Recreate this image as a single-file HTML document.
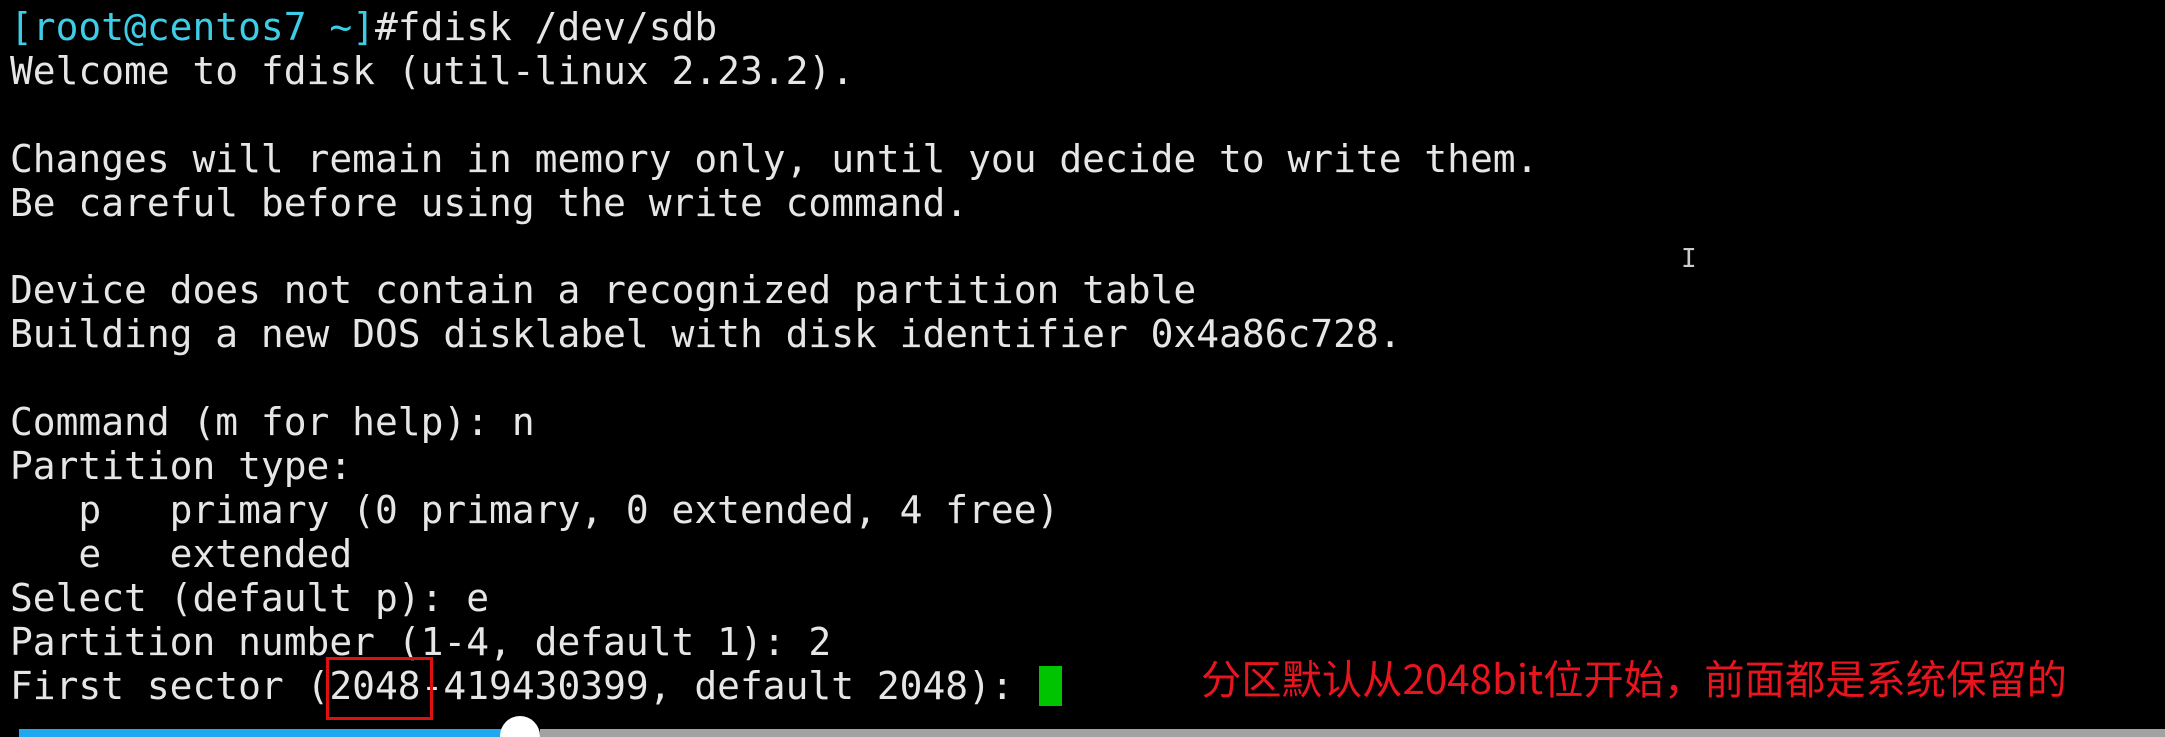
<!DOCTYPE html>
<html><head><meta charset="utf-8"><style>
html,body{margin:0;padding:0;background:#000;width:2165px;height:737px;overflow:hidden;position:relative}
pre{position:absolute;left:10px;top:6px;margin:0;font-family:"DejaVu Sans Mono","Liberation Mono",monospace;font-size:37.9px;line-height:43.9px;color:#e6e6e6;letter-spacing:0}
.c{color:#3ecde6}
.box{position:absolute;left:326px;top:657px;width:101px;height:57px;border:3px solid #e01010}
.cur{position:absolute;left:1039px;top:666px;width:23px;height:40px;background:#00c400}
.note{position:absolute;left:1201px;top:651px;font-family:"Noto Sans CJK SC","Liberation Sans",sans-serif;font-size:40.3px;color:#e8141e;white-space:nowrap;line-height:52px}
.blue{position:absolute;left:19px;top:729px;width:490px;height:8px;background:#1ea8f0}
.grey{position:absolute;left:540px;top:729px;width:1625px;height:8px;background:#a2a2a2}
.thumb{position:absolute;left:500px;top:716px;width:40px;height:40px;border-radius:50%;background:#fff}
.ib{position:absolute;left:1681px;top:244px;font-family:"DejaVu Sans Mono",monospace;font-size:26px;color:#ccc}
</style></head><body>
<pre><span class="c">[root@centos7 ~]</span>#fdisk /dev/sdb
Welcome to fdisk (util-linux 2.23.2).

Changes will remain in memory only, until you decide to write them.
Be careful before using the write command.

Device does not contain a recognized partition table
Building a new DOS disklabel with disk identifier 0x4a86c728.

Command (m for help): n
Partition type:
   p   primary (0 primary, 0 extended, 4 free)
   e   extended
Select (default p): e
Partition number (1-4, default 1): 2
First sector (2048-419430399, default 2048): </pre>
<div class="box"></div>
<div class="cur"></div>
<div class="ib">I</div>
<div class="note">分区默认从2048bit位开始，前面都是系统保留的</div>
<div class="blue"></div><div class="grey"></div><div class="thumb"></div>
</body></html>
